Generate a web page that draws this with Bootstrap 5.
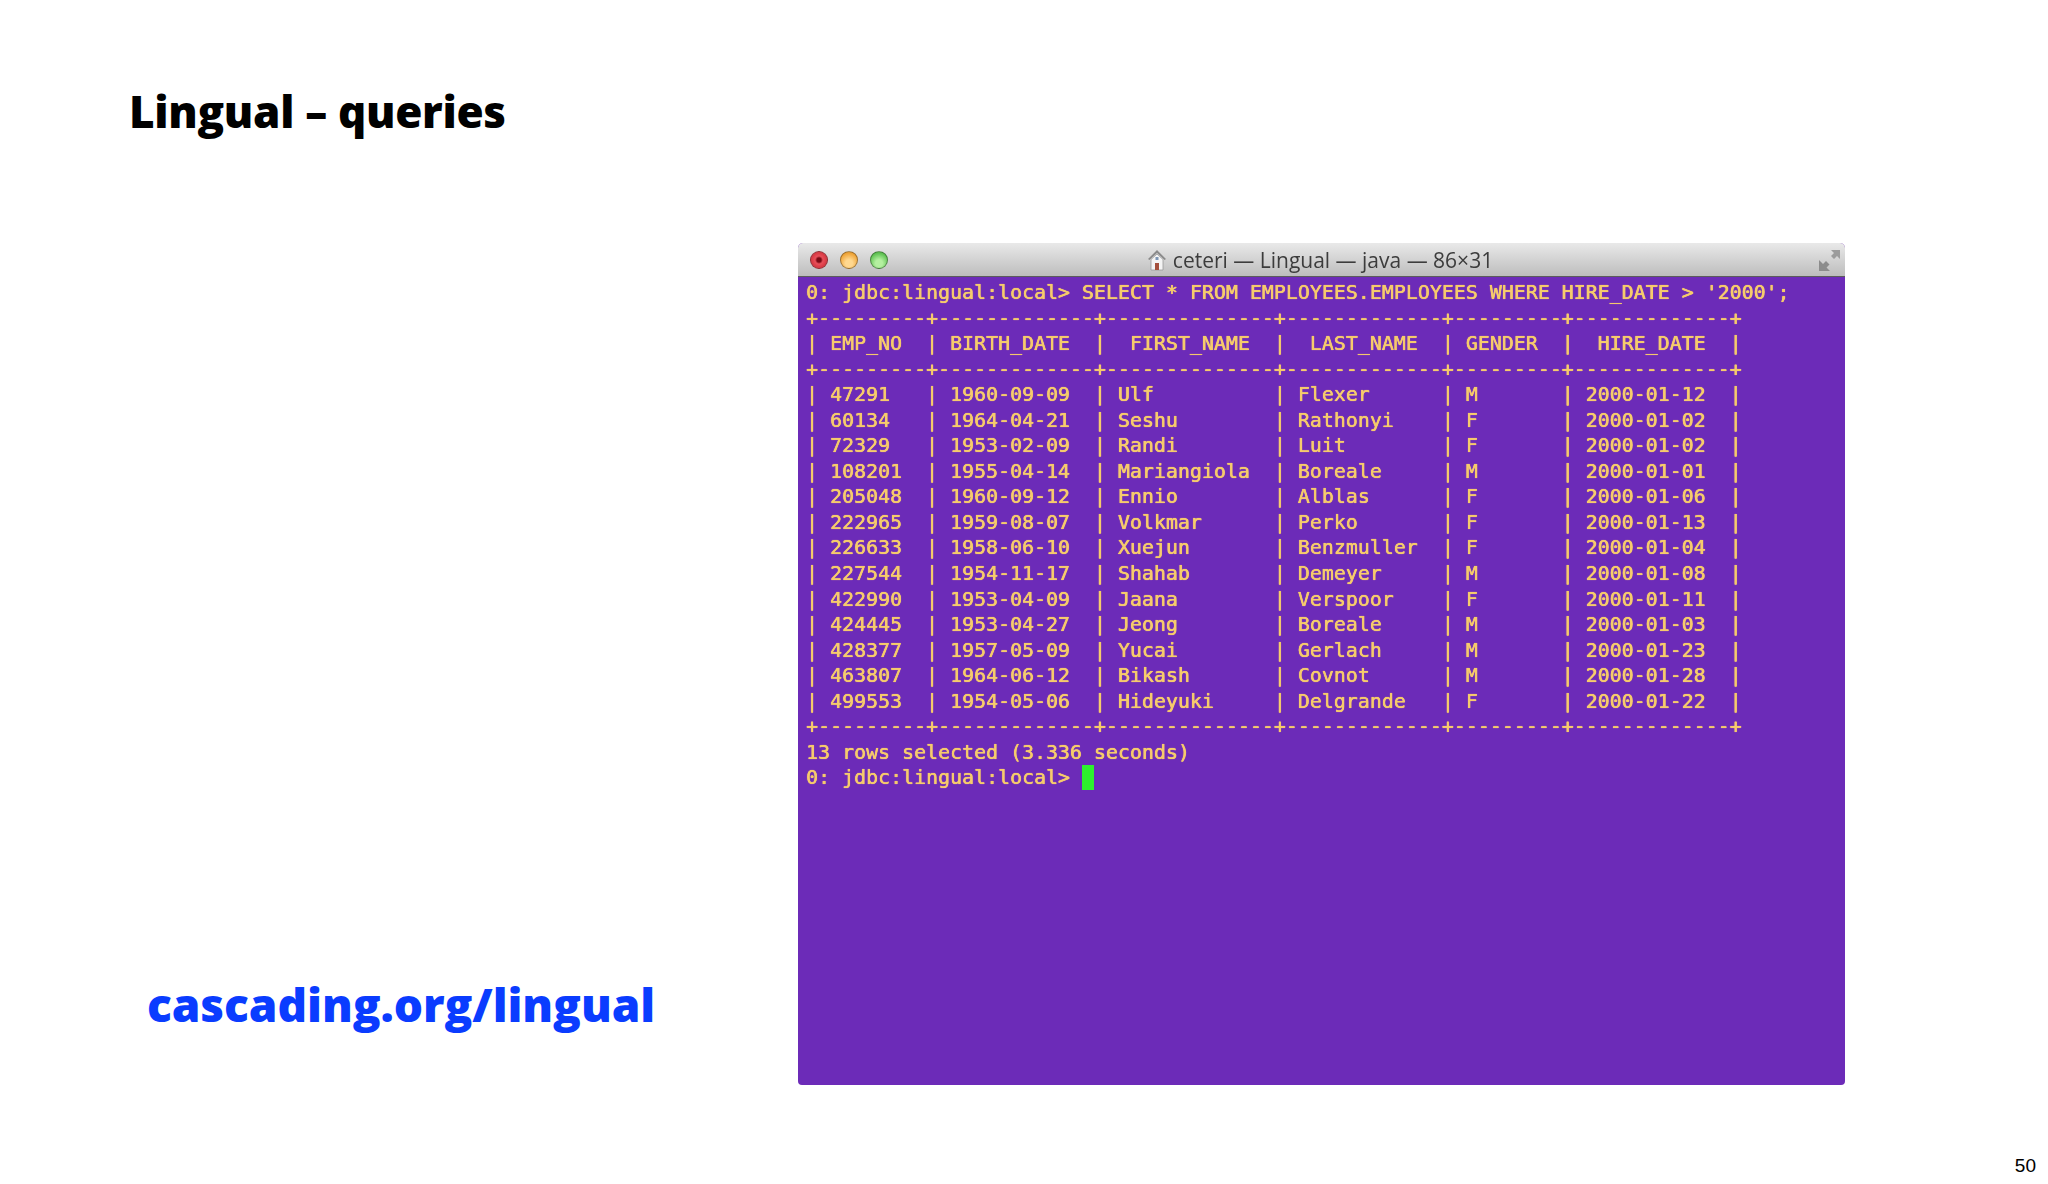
<!DOCTYPE html>
<html lang="en">
<head>
<meta charset="utf-8">
<title>Lingual – queries</title>
<link rel="stylesheet" href="https://cdn.jsdelivr.net/npm/bootstrap@5.3.0/dist/css/bootstrap.min.css">
<style>
body { background: #fff; overflow: hidden; }
.slide-page { width: 2048px; height: 1184px; }
.slide-title { font-family: "Open Sans", sans-serif; font-weight: 800; font-size: 44px; line-height: 54px; color: #000; margin: 84px 0 0 129px; letter-spacing: -.3px; }
.slide-body { margin-top: 105px; height: 842px; }
.left-pane { width: 798px; padding: 0 0 52px 147px; }
.slide-link { font-family: "Open Sans", sans-serif; font-weight: 800; font-size: 46px; line-height: 58px; color: #0a3cff; text-decoration: none; letter-spacing: -.05px; }
.term-window { width: 1047px; height: 842px; background: #6c2bb8; border-radius: 5px 5px 4px 4px; overflow: hidden; }
.term-bar { height: 34px; background: linear-gradient(#e9e9e9, #bdbdbd); border-bottom: 1px solid #5c5c5c; padding: 0 4px 0 12px; }
.term-lights { gap: 12px; flex: 1 1 0; }
.term-resize { flex: 1 1 0; }
.light { width: 18px; height: 18px; border-radius: 50%; border: 1px solid rgba(0,0,0,.35); }
.light-red { background: radial-gradient(circle at 50% 50%, #7a0a14 0 18%, #e8505a 35%, #d83a44 65%, #f5a0a5 100%); }
.light-amber { background: radial-gradient(circle at 50% 70%, #ffd890 0 25%, #f0a63a 70%, #c88a30 100%); }
.light-green { background: radial-gradient(circle at 50% 70%, #b4f0a0 0 25%, #62c455 70%, #4a9e40 100%); }
.term-title { font-family: "Open Sans", sans-serif; font-size: 21px; color: #3c3c3c; line-height: 32px; gap: 6px; filter: blur(.3px); margin-right: 11px; }
.term-output { margin: 0; padding: 3px 0 0 8px; font-family: "DejaVu Sans Mono", monospace; font-size: 19.93px; line-height: 25.55px; color: #f6cb6c; overflow: hidden; text-shadow: .35px 0 0 #f6cb6c, 0 0 1px #f6cb6c; filter: blur(.45px); }
.term-cursor { display: inline-block; width: 12px; height: 25px; background: #2df02d; vertical-align: -6px; }
.page-num { font-family: "Liberation Sans", sans-serif; font-size: 19px; line-height: 22px; color: #000; padding: 0 12px 0 0; margin-top: 70px; }
</style>
</head>
<body>
<div class="slide-page d-flex flex-column">
  <h1 class="slide-title">Lingual – queries</h1>
  <div class="slide-body d-flex">
    <div class="left-pane d-flex align-items-end">
      <a class="slide-link" href="#">cascading.org/lingual</a>
    </div>
    <div class="term-window d-flex flex-column">
      <div class="term-bar d-flex align-items-center">
        <div class="term-lights d-flex">
          <span class="light light-red"></span><span class="light light-amber"></span><span class="light light-green"></span>
        </div>
        <div class="term-title d-flex justify-content-center align-items-center">
          <svg width="20" height="22" viewBox="0 0 20 22" aria-hidden="true"><path d="M10 1 1 10l1.5 1L10 4l7.500 7L19 10z" fill="#8a8a8a"/><path d="M4 10.500 10 5l6 5.500V21H4z" fill="#f4f4f4" stroke="#9a9a9a" stroke-width=".8"/><rect x="8" y="14" width="4" height="7" fill="#a5503c"/><rect x="8.500" y="8" width="3" height="3" fill="#7f97b5"/></svg>
          <span>ceteri — Lingual — java — 86×31</span>
        </div>
        <div class="term-resize d-flex justify-content-end">
          <svg width="24" height="24" viewBox="0 0 24 24" aria-hidden="true"><path d="M14 2h9v9l-3-3-3 3-3-3 3-3z" fill="#9c9c9c"/><path d="M2 12v11h11l-3.500-3.500 3-3-3.500-3.500-3 3z" fill="#8c8c8c"/></svg>
        </div>
      </div>
<pre class="term-output">0: jdbc:lingual:local> SELECT * FROM EMPLOYEES.EMPLOYEES WHERE HIRE_DATE > '2000';
+---------+-------------+--------------+-------------+---------+-------------+
| EMP_NO  | BIRTH_DATE  |  FIRST_NAME  |  LAST_NAME  | GENDER  |  HIRE_DATE  |
+---------+-------------+--------------+-------------+---------+-------------+
| 47291   | 1960-09-09  | Ulf          | Flexer      | M       | 2000-01-12  |
| 60134   | 1964-04-21  | Seshu        | Rathonyi    | F       | 2000-01-02  |
| 72329   | 1953-02-09  | Randi        | Luit        | F       | 2000-01-02  |
| 108201  | 1955-04-14  | Mariangiola  | Boreale     | M       | 2000-01-01  |
| 205048  | 1960-09-12  | Ennio        | Alblas      | F       | 2000-01-06  |
| 222965  | 1959-08-07  | Volkmar      | Perko       | F       | 2000-01-13  |
| 226633  | 1958-06-10  | Xuejun       | Benzmuller  | F       | 2000-01-04  |
| 227544  | 1954-11-17  | Shahab       | Demeyer     | M       | 2000-01-08  |
| 422990  | 1953-04-09  | Jaana        | Verspoor    | F       | 2000-01-11  |
| 424445  | 1953-04-27  | Jeong        | Boreale     | M       | 2000-01-03  |
| 428377  | 1957-05-09  | Yucai        | Gerlach     | M       | 2000-01-23  |
| 463807  | 1964-06-12  | Bikash       | Covnot      | M       | 2000-01-28  |
| 499553  | 1954-05-06  | Hideyuki     | Delgrande   | F       | 2000-01-22  |
+---------+-------------+--------------+-------------+---------+-------------+
13 rows selected (3.336 seconds)
0: jdbc:lingual:local> <span class="term-cursor"></span></pre>
    </div>
  </div>
  <div class="page-num text-end">50</div>
</div>
<script src="https://cdn.jsdelivr.net/npm/bootstrap@5.3.0/dist/js/bootstrap.bundle.min.js"></script>
</body>
</html>
